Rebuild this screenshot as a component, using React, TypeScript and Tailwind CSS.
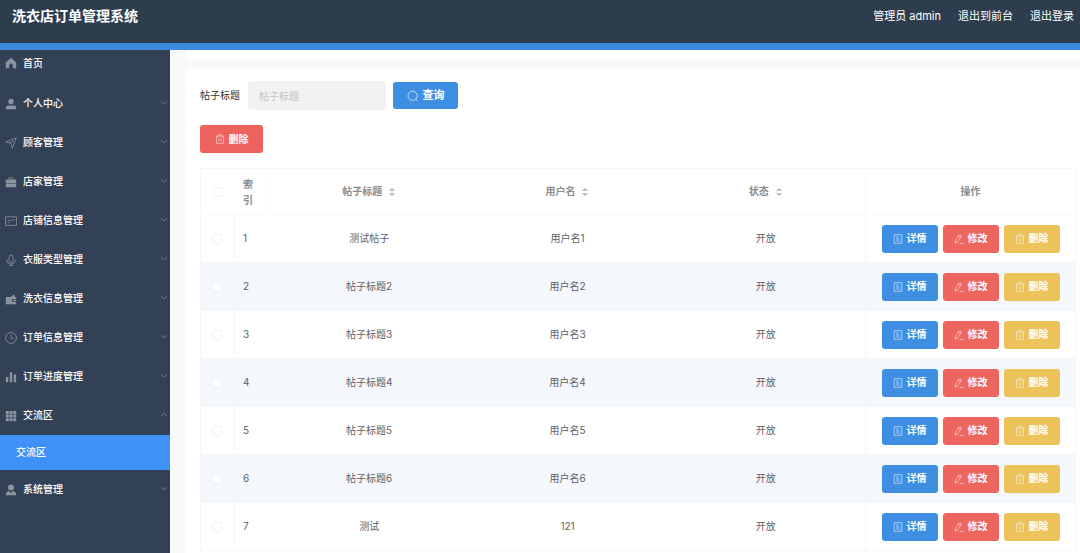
import React from 'react';

const glyphs: Record<string, React.ReactNode> = {
  home: <path fill="currentColor" d="M6 .8 11.2 5.4V11.2H7.8V8.2a1.8 1.8 0 0 0-3.6 0v3H.8V5.4Z" />,
  person: (
    <g fill="currentColor">
      <circle cx="6" cy="3.5" r="2.7" />
      <path d="M.8 11.2V9.6Q.8 7.4 3 7.4H9q2.2 0 2.2 2.2v1.6Z" />
    </g>
  ),
  send: <path d="M.8 5 11.2.9 7.4 11.2 5.8 6.2ZM5.8 6.2l2.8-2.8" />,
  briefcase: (
    <>
      <path d="M4 3.6V1.8h4v1.8" />
      <path fill="currentColor" stroke="none" d="M.8 3.4h10.4v3.5H.8ZM.8 7.6h10.4v3.6H.8Z" />
    </>
  ),
  card: <path d="M.6 1.8h10.8v8.6H.6ZM2.8 7.6h2M2.8 5.4H6M7 5.8l1-1.2h1.4" />,
  mic: <path d="M4 3a2 2 0 0 1 4 0v3.6a2 2 0 0 1-4 0ZM2 5.4v1.4a4 3.4 0 0 0 8 0V5.4M6 10.2v1.5M4 11.6h4" />,
  wallet: (
    <path
      fill="currentColor"
      d="M.8 4h5L8.6 1.4 10 3v1h1.2v2.2H8a1.2 1.2 0 0 0 0 2.6h3.2v2.4H.8ZM8 6.9h3.2v1.2H8Z"
    />
  ),
  clock: <path d="M6 .6a5.4 5.4 0 1 1 0 10.8A5.4 5.4 0 0 1 6 .6ZM6 3v3.4h2.8" />,
  bars: <path fill="currentColor" d="M.9 6h2.4v5.2H.9ZM4.8 1.2h2.4v10H4.8ZM8.7 3.6h2.4v7.6H8.7Z" />,
  grid: (
    <path
      fill="currentColor"
      d="M.8.9h3v3h-3ZM4.5.9h3v3h-3ZM8.2.9h3v3h-3ZM.8 4.6h3v3h-3ZM4.5 4.6h3v3h-3ZM8.2 4.6h3v3h-3ZM.8 8.3h3v3h-3ZM4.5 8.3h3v3h-3ZM8.2 8.3h3v3h-3Z"
    />
  ),
  admin: (
    <g fill="currentColor">
      <circle cx="6" cy="3.6" r="3" />
      <path d="M.8 11.2q0-3.6 3.4-4.2L6 9l1.8-2q3.4.6 3.4 4.2Z" />
    </g>
  ),
  search: <path d="M5.6 1.2a4.6 4.6 0 1 1 0 9.2A4.6 4.6 0 0 1 5.6 1.2ZM8.6 9.2l2 1.4" />,
  trash: <path d="M.8 2.6h10.4M4 2.4V.9h4v1.5M1.9 2.8v8.4h8.2V2.8M4.7 5.2v3.6M7.3 5.2v3.6" />,
  doc: <path d="M1.4.8h9.2v10.4H1.4ZM3.5 3.6h3M3.5 6h5M3.5 8.4h5" />,
  edit: <path d="M6.6.9 9.2 2.6 4.4 9.8 1.4 11 1.7 8.1ZM5.4 2.7l2.5 1.7M6.6 11.2h4.8" />,
};

const solid = ['home', 'person', 'wallet', 'bars', 'grid', 'admin'];

function Icon({ name, className }: { name: string; className: string }) {
  return (
    <svg
      viewBox="0 0 12 12"
      className={`shrink-0 ${className}`}
      fill="none"
      stroke="currentColor"
      strokeWidth={solid.includes(name) ? 0 : 0.8}
      aria-hidden="true"
    >
      {glyphs[name]}
    </svg>
  );
}

function Chevron({ up }: { up?: boolean }) {
  return (
    <svg viewBox="0 0 8 8" className="size-2 shrink-0 text-[#768496]" fill="none" stroke="currentColor" strokeWidth="0.8" aria-hidden="true">
      <path d={up ? 'M1 4 4 1.4 7 4' : 'M1 1.4 4 4l3-2.6'} />
    </svg>
  );
}

const menu = [
  { label: '个人中心', icon: 'person' },
  { label: '顾客管理', icon: 'send' },
  { label: '店家管理', icon: 'briefcase' },
  { label: '店铺信息管理', icon: 'card' },
  { label: '衣服类型管理', icon: 'mic' },
  { label: '洗衣信息管理', icon: 'wallet' },
  { label: '订单信息管理', icon: 'clock' },
  { label: '订单进度管理', icon: 'bars' },
  { label: '交流区', icon: 'grid', children: ['交流区'] },
  { label: '系统管理', icon: 'admin' },
];

const rows = [
  ['测试帖子', '用户名1', '开放'],
  ['帖子标题2', '用户名2', '开放'],
  ['帖子标题3', '用户名3', '开放'],
  ['帖子标题4', '用户名4', '开放'],
  ['帖子标题5', '用户名5', '开放'],
  ['帖子标题6', '用户名6', '开放'],
  ['测试', '121', '开放'],
];

const box = 'block size-2.5 appearance-none rounded-xs border border-[#eff1f4] bg-white checked:bg-[#3e8ee4]';

function ActionButton({ icon, label, tone }: { icon: string; label: string; tone: string }) {
  return (
    <button
      type="button"
      className={`flex h-7 w-14 items-center justify-center gap-1 rounded-[3px] text-[10px] font-bold text-white ${tone}`}
    >
      <Icon name={icon} className="size-2.5 opacity-80" />
      {label}
    </button>
  );
}

function SortableHead({ label }: { label: string }) {
  return (
    <th className="border-b border-[#f8f9fa] font-bold">
      <button type="button" className="inline-flex items-center gap-1.5 align-middle">
        {label}
        <svg viewBox="0 0 8 10" className="h-2.5 w-2 text-[#bdbfc4]" fill="currentColor" aria-hidden="true">
          <path d="M4 .8 7.2 3.9H.8ZM4 9.2.8 6.1h6.4Z" />
        </svg>
      </button>
    </th>
  );
}

export default function App() {
  return (
    <div className="flex h-screen flex-col overflow-hidden bg-[#f7f9fa] font-['Inter','Noto_Sans_CJK_SC',sans-serif] text-[10px] text-[#606266]">
      <header className="flex h-[50px] shrink-0 items-start justify-between border-b-[7px] border-[#3e8be0] bg-[#2e3d4e] pt-1.5 pr-1.5 pl-3 text-white">
        <h1 className="text-sm leading-5 font-bold">洗衣店订单管理系统</h1>
        <div className="flex gap-[17px] text-[11px] leading-5">
          <span>管理员 admin</span>
          <a href="#front">退出到前台</a>
          <a href="#logout">退出登录</a>
        </div>
      </header>

      <div className="flex min-h-0 flex-1">
        <nav className="w-[170px] shrink-0 overflow-hidden bg-[#334156] font-medium text-white" aria-label="主菜单">
          <a href="#home" className="flex h-[34px] items-center gap-1.5 pb-2 pl-[5px]">
            <Icon name="home" className="size-3 text-[#8b939f]" />
            首页
          </a>
          <ul>
            {menu.map((item) => (
              <li key={item.label}>
                <button
                  type="button"
                  aria-expanded={!!item.children}
                  className="flex h-[39px] w-full items-center gap-1.5 pr-0.5 pl-[5px] text-left"
                >
                  <Icon name={item.icon} className="size-3 text-[#8b939f]" />
                  <span className="flex-1">{item.label}</span>
                  <Chevron up={!!item.children} />
                </button>
                {item.children?.map((child) => (
                  <a key={child} href="#forum" className="flex h-[35px] items-center bg-[#4091f7] pl-4">
                    {child}
                  </a>
                ))}
              </li>
            ))}
          </ul>
        </nav>

        <main className="min-w-0 flex-1 overflow-hidden pl-4">
          <div className="h-2.5 bg-white" />
          <section className="mt-2 min-h-full bg-white pt-[13px] pr-1 pl-3.5">
            <form className="flex items-center" onSubmit={(e) => e.preventDefault()}>
              <label htmlFor="title" className="mr-2 text-[#303133]">
                帖子标题
              </label>
              <input
                id="title"
                placeholder="帖子标题"
                className="mr-[7px] h-[29px] w-[138px] rounded-[4px] bg-[#f3f1f1] px-[11px] outline-none placeholder:text-[#c3c3c6]"
              />
              <button
                type="submit"
                className="flex h-[27px] w-[65px] items-center justify-center gap-1 rounded-[3px] bg-[#3e8ee4] text-[11px] font-bold text-white"
              >
                <Icon name="search" className="size-3 opacity-80" />
                查询
              </button>
            </form>

            <button
              type="button"
              className="mt-[15px] flex h-7 w-[63px] items-center justify-center gap-1 rounded-[3px] bg-[#ee625d] text-[10px] font-bold text-white"
            >
              <Icon name="trash" className="size-2.5 opacity-80" />
              删除
            </button>

            <table className="mt-[15px] w-full table-fixed border-separate border-spacing-0 border-t border-r border-l border-[#f5f6f7] text-center">
              <colgroup>
                <col className="w-[34px]" />
                <col className="w-[35px]" />
                <col />
                <col />
                <col />
                <col className="w-[210px]" />
              </colgroup>
              <thead className="text-[#8a8c90]">
                <tr className="h-[46px]">
                  <th className="border-b border-[#f8f9fa] pl-3">
                    <input type="checkbox" aria-label="全选" className={box} />
                  </th>
                  <th className="border-r border-b border-[#f8f9fa] px-2 text-left leading-4 font-bold">索引</th>
                  <SortableHead label="帖子标题" />
                  <SortableHead label="用户名" />
                  <SortableHead label="状态" />
                  <th className="border-b border-l border-[#f8f9fa] font-bold">操作</th>
                </tr>
              </thead>
              <tbody>
                {rows.map((row, i) => (
                  <tr key={row[0]} className="h-12 even:bg-[#f4f7fb]">
                    <td className="border-r border-b border-[#f5f6f8] pl-[11px]">
                      <input type="checkbox" aria-label={`选择 ${row[0]}`} className={box} />
                    </td>
                    <td className="border-b border-[#f5f6f8] px-2 text-left">{i + 1}</td>
                    {row.map((cell) => (
                      <td key={cell} className="border-b border-[#f5f6f8]">
                        {cell}
                      </td>
                    ))}
                    <td className="border-b border-l border-[#f5f6f8]">
                      <div className="flex justify-center gap-[5px]">
                        <ActionButton icon="doc" label="详情" tone="bg-[#3e8ee4]" />
                        <ActionButton icon="edit" label="修改" tone="bg-[#ec655f]" />
                        <ActionButton icon="trash" label="删除" tone="bg-[#ebc35a]" />
                      </div>
                    </td>
                  </tr>
                ))}
              </tbody>
            </table>
          </section>
        </main>
      </div>
    </div>
  );
}
